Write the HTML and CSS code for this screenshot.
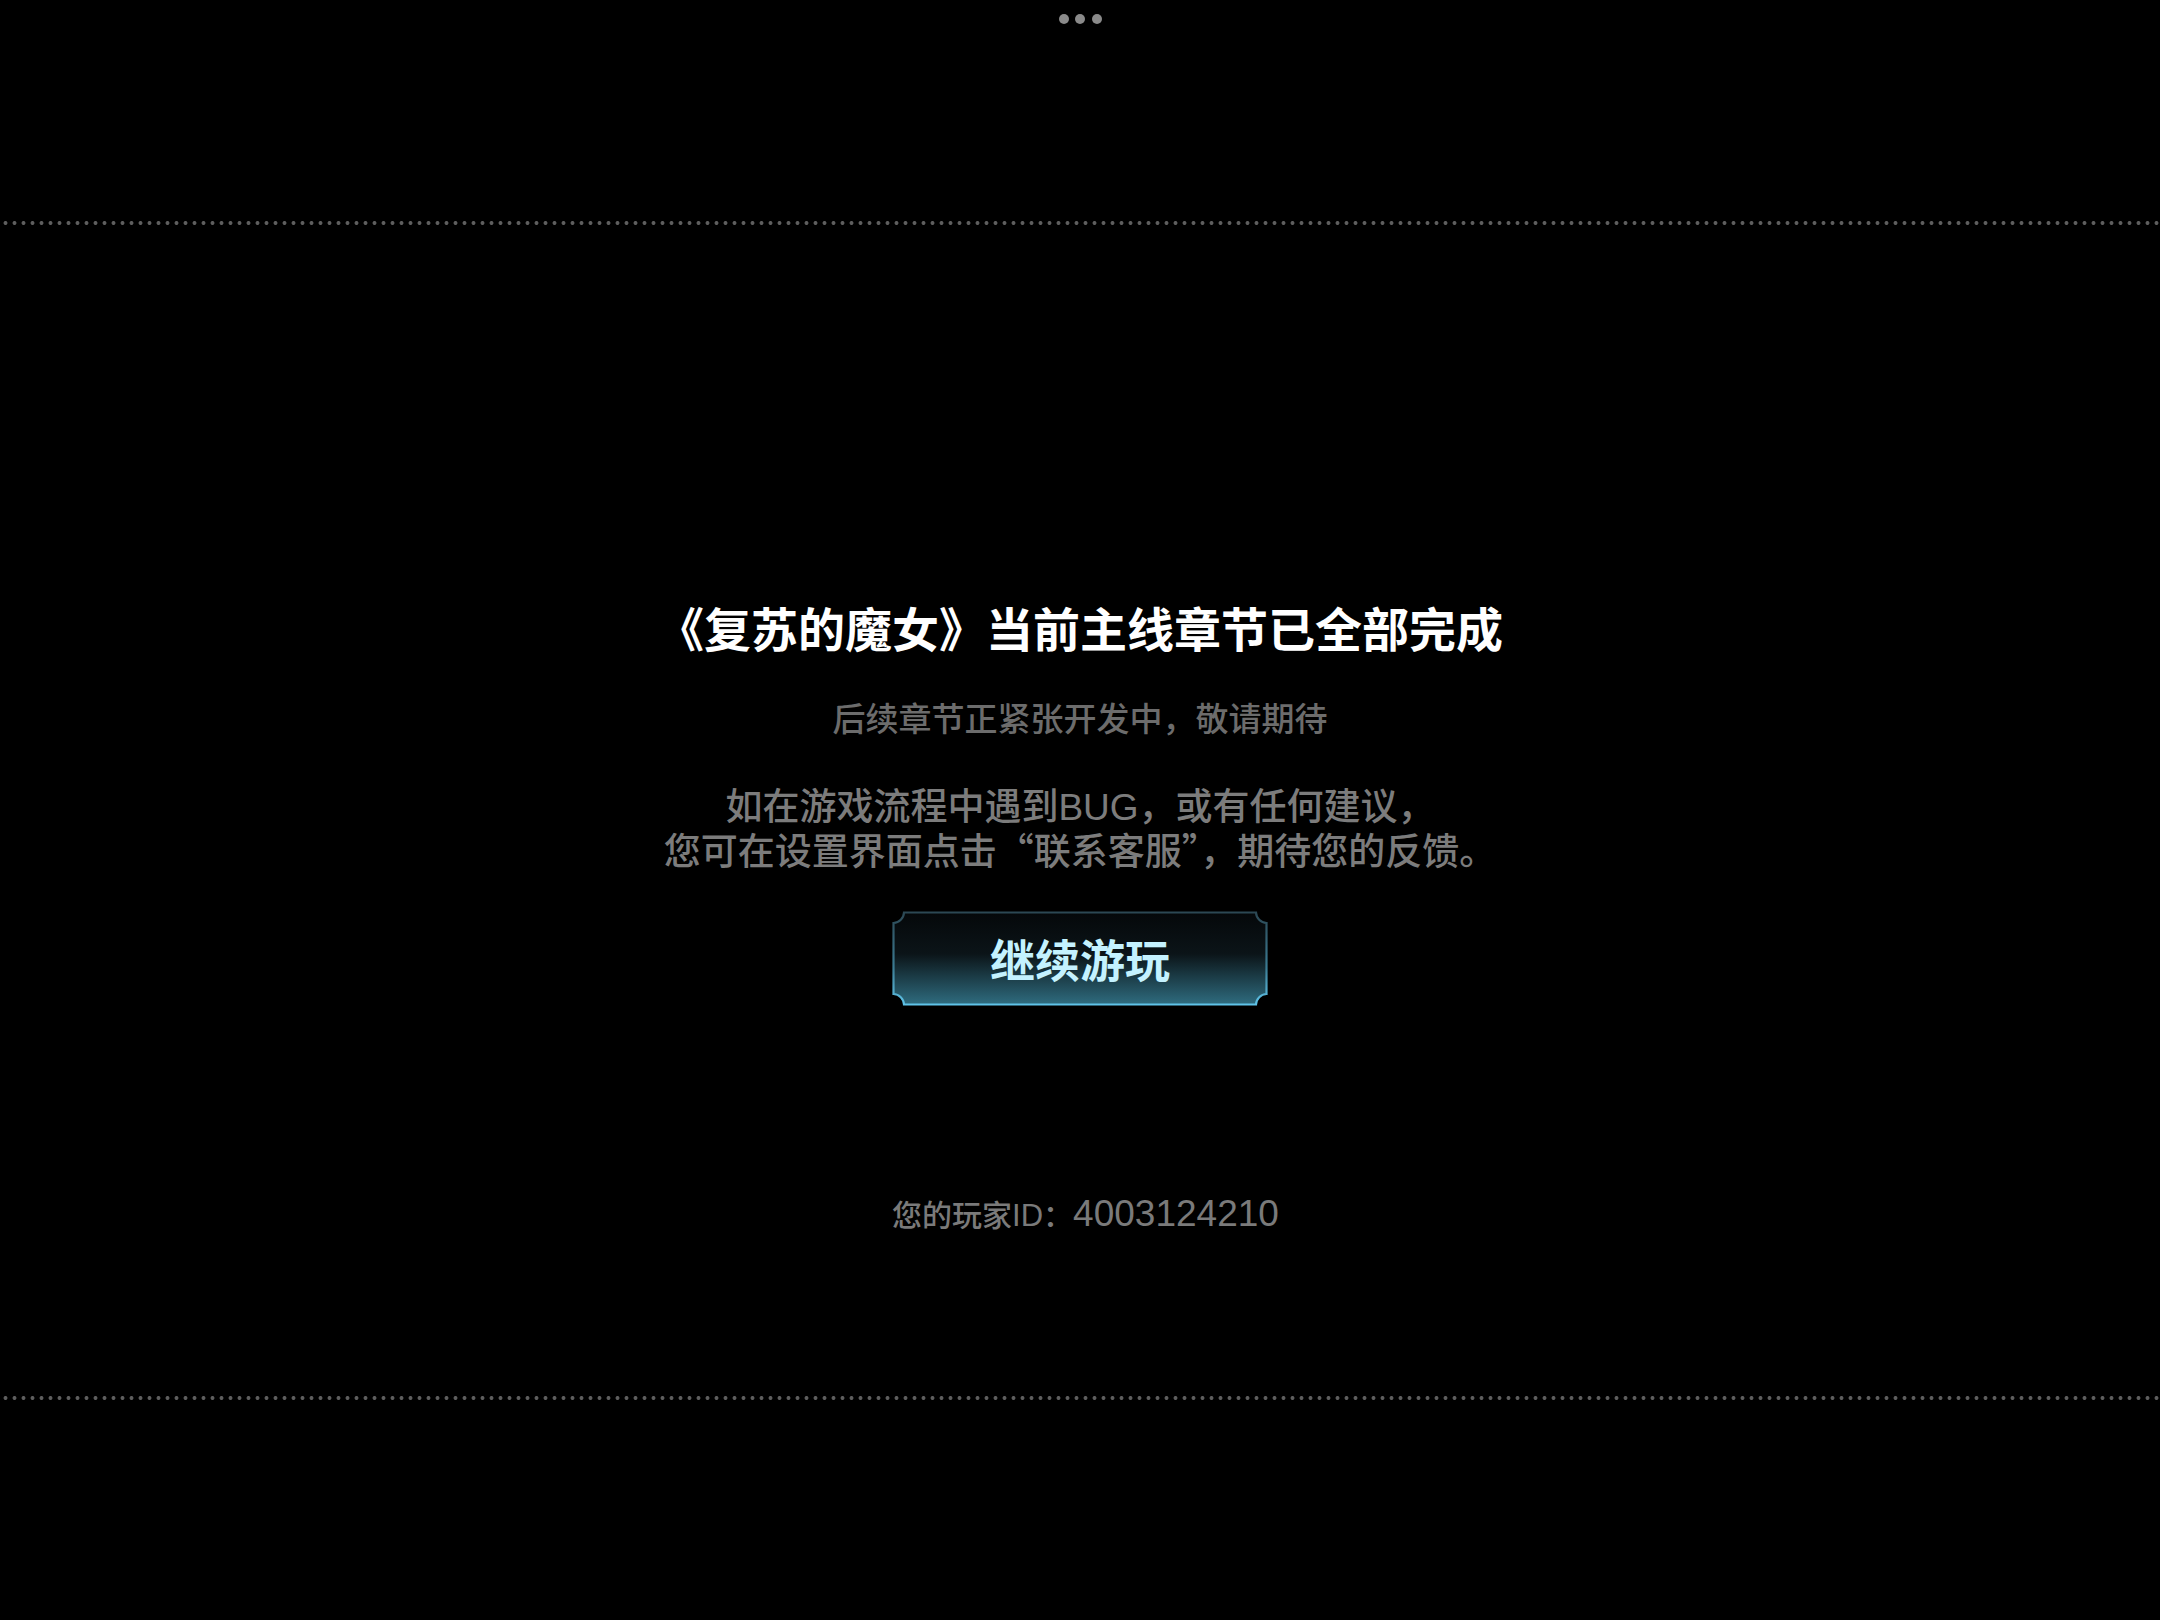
FILE: index.html
```html
<!DOCTYPE html>
<html lang="zh-CN">
<head>
<meta charset="utf-8">
<title>复苏的魔女</title>
<link rel="stylesheet" href="styles.css">
</head>
<body>
<div class="screen">
  <div class="menu-dots">
    <span class="menu-dot"></span><span class="menu-dot"></span><span class="menu-dot"></span>
  </div>
  <div class="divider divider-top"></div>
  <main class="content">
    <h1 class="title">《复苏的魔女》当前主线章节已全部完成</h1>
    <p class="subtitle">后续章节正紧张开发中，敬请期待</p>
    <p class="notice">如在游戏流程中遇到<span class="latin">BUG</span>，或有任何建议，<br>您可在设置界面点击“联系客服”，期待您的反馈。</p>
    <button class="continue-btn" type="button">
      <svg class="btn-frame" viewBox="0 0 376 95" preserveAspectRatio="none" aria-hidden="true">
        <defs>
          <linearGradient id="btnFill" x1="0" y1="0" x2="0" y2="1">
            <stop offset="0" stop-color="#05080a"/>
            <stop offset="0.45" stop-color="#0b1418"/>
            <stop offset="1" stop-color="#2f6c7f"/>
          </linearGradient>
          <linearGradient id="btnStroke" x1="0" y1="0" x2="0" y2="1">
            <stop offset="0" stop-color="#2c4854"/>
            <stop offset="0.6" stop-color="#3b7c94"/>
            <stop offset="1" stop-color="#5fc3e8"/>
          </linearGradient>
        </defs>
        <path d="M12 1.5 H364 A11 11 0 0 0 374.5 12 V83 A11 11 0 0 0 364 93.5 H12 A11 11 0 0 0 1.5 83 V12 A11 11 0 0 0 12 1.5 Z" fill="url(#btnFill)" stroke="url(#btnStroke)" stroke-width="2.2"/>
      </svg>
      <span class="btn-label">继续游玩</span>
    </button>
    <p class="player-id">您的玩家<span class="latin id-letters">ID</span>：<span class="latin id-number">4003124210</span></p>
  </main>
  <div class="divider divider-bottom"></div>
</div>
</body>
</html>
```

FILE: styles.css
```css
html, body {
  margin: 0;
  padding: 0;
  background: #000;
}

body {
  font-family: "Noto Sans CJK SC", "Liberation Sans", sans-serif;
  color: #fff;
}

.screen {
  width: 2160px;
  height: 1620px;
  display: flex;
  flex-direction: column;
  align-items: stretch;
  overflow: hidden;
}

.menu-dots {
  display: flex;
  justify-content: center;
  gap: 6.5px;
  padding-top: 14px;
  height: 10px;
}

.menu-dot {
  width: 10px;
  height: 10px;
  border-radius: 50%;
  background: #8a8a8a;
}

.divider {
  height: 4px;
  background-image: radial-gradient(circle at center, #5e5e5e 0, #5e5e5e 1.6px, rgba(94,94,94,0) 2.3px);
  background-size: 9px 4px;
  background-position: 1px 0;
  background-repeat: repeat-x;
}

.divider-top {
  margin-top: 197px;
}

.content {
  display: flex;
  flex-direction: column;
  align-items: center;
  text-align: center;
}

.title {
  margin: 372px 0 0;
  font-size: 47px;
  line-height: 60px;
  font-weight: 700;
  color: #ffffff;
  letter-spacing: 0;
}

.subtitle {
  margin: 38px 0 0;
  font-size: 33px;
  line-height: 44px;
  font-weight: 500;
  color: #6c6c6c;
}

.notice {
  margin: 43px 0 0;
  font-size: 37px;
  line-height: 45px;
  font-weight: 500;
  color: #7c7c7c;
}

.latin {
  font-family: "Liberation Sans", "Noto Sans CJK SC", sans-serif;
  line-height: 1;
}

.continue-btn {
  position: relative;
  margin-top: 39px;
  width: 376px;
  height: 95px;
  padding: 0;
  border: 0;
  background: transparent;
  display: flex;
  align-items: center;
  justify-content: center;
  font-family: "Noto Sans CJK SC", sans-serif;
  cursor: pointer;
}

.btn-frame {
  position: absolute;
  left: 0;
  top: 0;
  width: 100%;
  height: 100%;
}

.btn-label {
  position: relative;
  font-size: 45px;
  line-height: 60px;
  font-weight: 700;
  color: #c4f2ff;
  letter-spacing: 0;
}

.player-id {
  margin: 185px 0 0;
  padding-left: 11px;
  font-size: 30px;
  line-height: 44px;
  font-weight: 500;
  color: #7a7a7a;
}

.id-letters {
  font-size: 31px;
  font-weight: 400;
}

.id-number {
  font-size: 37px;
  font-weight: 400;
}

.divider-bottom {
  margin-top: 161px;
}
```
